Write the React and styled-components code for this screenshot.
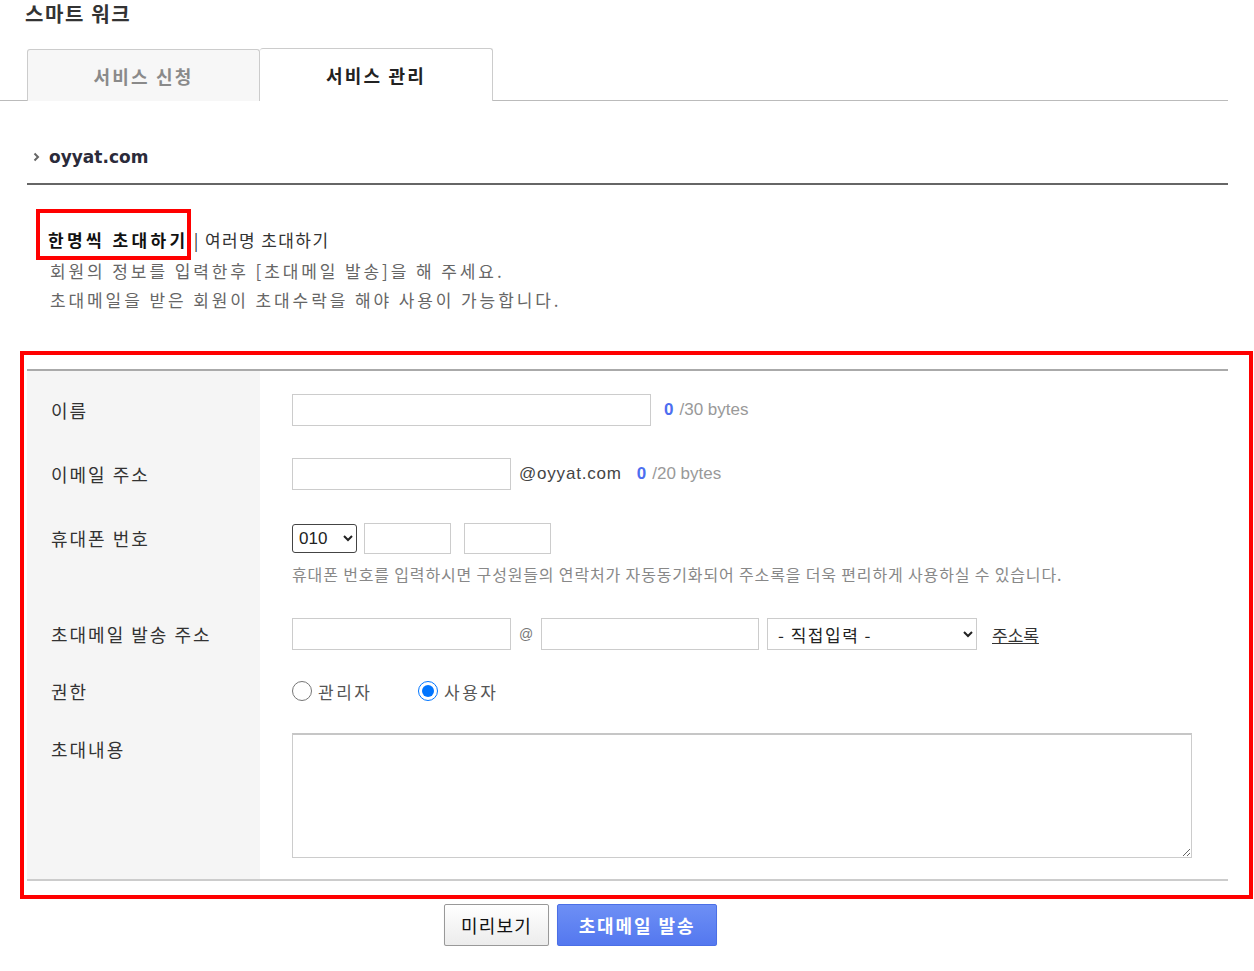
import React from "react"
import styled, { createGlobalStyle } from "styled-components"

const GlobalStyle = createGlobalStyle`
  body {
    margin: 0;
    background: #fff;
    font-family: "Noto Sans CJK KR", "Liberation Sans", sans-serif;
    color: #333;
  }
`

const Page = styled.div`
  width: 1228px;
`

const Title = styled.h1`
  margin: 0 0 20px 25px;
  font-size: 20px;
  line-height: 28px;
  font-weight: 700;
  letter-spacing: 1.6px;
  color: #333;
`

const TabBar = styled.div`
  display: flex;
  padding-left: 27px;
  border-bottom: 1px solid #bbb;
`

const Tab = styled.div`
  width: 233px;
  box-sizing: border-box;
  display: flex;
  align-items: center;
  justify-content: center;
  border: 1px solid #ccc;
  border-bottom: none;
  border-radius: 3px 3px 0 0;
  margin-bottom: -1px;
  font-size: 18px;
  font-weight: 700;
  letter-spacing: 2.2px;
  background: ${(p) => (p.$active ? "#fff" : "#f7f7f7")};
  color: ${(p) => (p.$active ? "#222" : "#8a8a8a")};
  height: ${(p) => (p.$active ? "53px" : "52px")};
  margin-top: ${(p) => (p.$active ? "0" : "1px")};
  border-left: ${(p) => (p.$active ? "none" : "1px solid #ccc")};
`

const Content = styled.div`
  padding-left: 27px;
`

const Breadcrumb = styled.div`
  display: flex;
  align-items: center;
  gap: 9px;
  padding: 44px 0 14px 6px;
  line-height: 24px;
  border-bottom: 2px solid #666;
  font-family: "DejaVu Sans", sans-serif;
  font-weight: 700;
  font-size: 17px;
  color: #2b2b3a;
`

const SubTabs = styled.div`
  margin: 41px 0 0 21px;
  font-size: 17px;
  line-height: 28px;
  letter-spacing: 1.4px;
  color: #333;
`

const ActiveSub = styled.span`
  position: relative;
  font-weight: 700;
  letter-spacing: 3.4px;
  color: #111;
`

const Marker = styled.span`
  position: absolute;
  top: -18px;
  bottom: -8px;
  left: -12px;
  right: -2px;
  border: 4px solid #f00;
  pointer-events: none;
`

const Desc = styled.p`
  margin: 2px 0 0 23px;
  font-size: 17px;
  line-height: 29px;
  letter-spacing: 2.9px;
  color: #666;
`

const FormWrap = styled.div`
  position: relative;
  margin-top: 55px;
`

const FormMarker = styled.div`
  position: absolute;
  top: -18px;
  bottom: -18px;
  left: -7px;
  right: -25px;
  border: 4px solid #f00;
  pointer-events: none;
`

const FormTable = styled.div`
  display: grid;
  grid-template-columns: 233px 1fr;
  padding-bottom: 21px;
  border-top: 2px solid #aaa;
  border-bottom: 2px solid #ccc;
  background: linear-gradient(to right, #f5f5f5 233px, #fff 233px);
`

const Label = styled.div`
  padding: ${(p) => p.$top}px 0 0 24px;
  font-size: 18px;
  line-height: 32px;
  letter-spacing: 2px;
  color: #333;
`

const Field = styled.div`
  padding: ${(p) => p.$top}px 0 0 32px;
`

const Line = styled.div`
  display: flex;
  align-items: center;
  height: 32px;
`

const Input = styled.input`
  box-sizing: border-box;
  width: ${(p) => p.$w}px;
  height: ${(p) => p.$h || 32}px;
  margin: 0 ${(p) => p.$mr || 0}px 0 0;
  border: 1px solid #ccc;
  padding: 0 6px;
  font-size: 16px;
  outline: none;
`

const Select = styled.select`
  box-sizing: border-box;
  width: ${(p) => p.$w}px;
  height: ${(p) => p.$h}px;
  margin-right: ${(p) => p.$mr || 0}px;
  border: 1px solid ${(p) => (p.$dark ? "#444" : "#ccc")};
  border-radius: ${(p) => (p.$dark ? "3px" : "0")};
  background: #fff;
  color: #222;
  font-family: ${(p) => (p.$dark ? '"Liberation Sans", sans-serif' : '"Noto Sans CJK KR", sans-serif')};
  font-size: 17px;
  letter-spacing: ${(p) => (p.$dark ? "0" : "1.5px")};
  padding: 0 ${(p) => (p.$dark ? 2 : 6)}px;
`

const Count = styled.span`
  margin-left: ${(p) => p.$ml}px;
  font-family: "Liberation Sans", sans-serif;
  font-size: 17px;
  color: #999;
  b {
    color: #4d6ef0;
    margin-right: 6px;
  }
`

const Domain = styled.span`
  margin-left: 8px;
  font-family: "Liberation Sans", sans-serif;
  font-size: 17px;
  letter-spacing: 0.8px;
  color: #444;
`

const At = styled.span`
  width: 30px;
  text-align: center;
  font-family: "Liberation Sans", sans-serif;
  font-size: 14px;
  color: #777;
`

const Help = styled.div`
  margin-top: 10px;
  font-size: 16px;
  line-height: 20px;
  letter-spacing: 0.85px;
  color: #888;
`

const Link = styled.a`
  margin-left: 15px;
  font-size: 17px;
  color: #333;
  text-decoration: underline;
`

const RadioLabel = styled.label`
  display: flex;
  align-items: center;
  gap: 6px;
  width: ${(p) => p.$w}px;
  font-size: 17px;
  letter-spacing: 2.5px;
  color: #555;
  input {
    width: 20px;
    height: 20px;
    margin: 0;
  }
`

const TextArea = styled.textarea`
  display: block;
  box-sizing: border-box;
  width: 900px;
  height: 125px;
  border: 1px solid #ccc;
  border-top: 2px solid #c6c6c6;
  resize: vertical;
  outline: none;
`

const Buttons = styled.div`
  display: flex;
  gap: 8px;
  padding: 23px 0 0 417px;
`

const Button = styled.button`
  height: 42px;
  width: ${(p) => p.$w}px;
  border-radius: 2px;
  font-family: "Noto Sans CJK KR", sans-serif;
  font-size: 18px;
  font-weight: ${(p) => (p.$primary ? 700 : 400)};
  letter-spacing: ${(p) => (p.$primary ? "1.9px" : "1.2px")};
  color: ${(p) => (p.$primary ? "#fff" : "#111")};
  border: 1px solid ${(p) => (p.$primary ? "#4b6fe6" : "#999")};
  background: ${(p) =>
    p.$primary
      ? "linear-gradient(#6d8ff5, #5478ef)"
      : "linear-gradient(#fff, #ececec)"};
  box-shadow: 0 1px 1px rgba(0, 0, 0, 0.15);
`

const Chevron = () => (
  <svg width="7" height="10" viewBox="0 0 7 10">
    <polyline points="1.5,1.5 5,5 1.5,8.5" fill="none" stroke="#666" strokeWidth="2" />
  </svg>
)

export default function App() {
  return (
    <Page>
      <GlobalStyle />
      <Title>스마트 워크</Title>
      <TabBar>
        <Tab>서비스 신청</Tab>
        <Tab $active>서비스 관리</Tab>
      </TabBar>
      <Content>
        <Breadcrumb>
          <Chevron />
          oyyat.com
        </Breadcrumb>
        <SubTabs>
          <ActiveSub>
            한명씩 초대하기
            <Marker />
          </ActiveSub>{" "}
          | 여러명 초대하기
        </SubTabs>
        <Desc>
          회원의 정보를 입력한후 [초대메일 발송]을 해 주세요.
          <br />
          초대메일을 받은 회원이 초대수락을 해야 사용이 가능합니다.
        </Desc>

        <FormWrap>
          <FormMarker />
          <FormTable>
            <Label $top={23}>이름</Label>
            <Field $top={23}>
              <Line>
                <Input $w={359} />
                <Count $ml={13}>
                  <b>0</b>/30 bytes
                </Count>
              </Line>
            </Field>

            <Label $top={32}>이메일 주소</Label>
            <Field $top={32}>
              <Line>
                <Input $w={219} />
                <Domain>@oyyat.com</Domain>
                <Count $ml={15}>
                  <b>0</b>/20 bytes
                </Count>
              </Line>
            </Field>

            <Label $top={32}>휴대폰 번호</Label>
            <Field $top={32}>
              <Line>
                <Select $w={65} $h={29} $mr={7} $dark>
                  <option>010</option>
                </Select>
                <Input $w={87} $h={31} $mr={13} />
                <Input $w={87} $h={31} />
              </Line>
              <Help>
                휴대폰 번호를 입력하시면 구성원들의 연락처가 자동동기화되어 주소록을 더욱 편리하게 사용하실 수 있습니다.
              </Help>
            </Field>

            <Label $top={34}>초대메일 발송 주소</Label>
            <Field $top={34}>
              <Line>
                <Input $w={219} />
                <At>@</At>
                <Input $w={218} $mr={8} />
                <Select $w={210} $h={32}>
                  <option>- 직접입력 -</option>
                </Select>
                <Link href="#">주소록</Link>
              </Line>
            </Field>

            <Label $top={25}>권한</Label>
            <Field $top={25}>
              <Line>
                <RadioLabel $w={126}>
                  <input type="radio" name="role" />
                  관리자
                </RadioLabel>
                <RadioLabel $w={120}>
                  <input type="radio" name="role" defaultChecked />
                  사용자
                </RadioLabel>
              </Line>
            </Field>

            <Label $top={26}>초대내용</Label>
            <Field $top={26}>
              <TextArea />
            </Field>
          </FormTable>
        </FormWrap>

        <Buttons>
          <Button $w={105}>미리보기</Button>
          <Button $w={160} $primary>
            초대메일 발송
          </Button>
        </Buttons>
      </Content>
    </Page>
  )
}
